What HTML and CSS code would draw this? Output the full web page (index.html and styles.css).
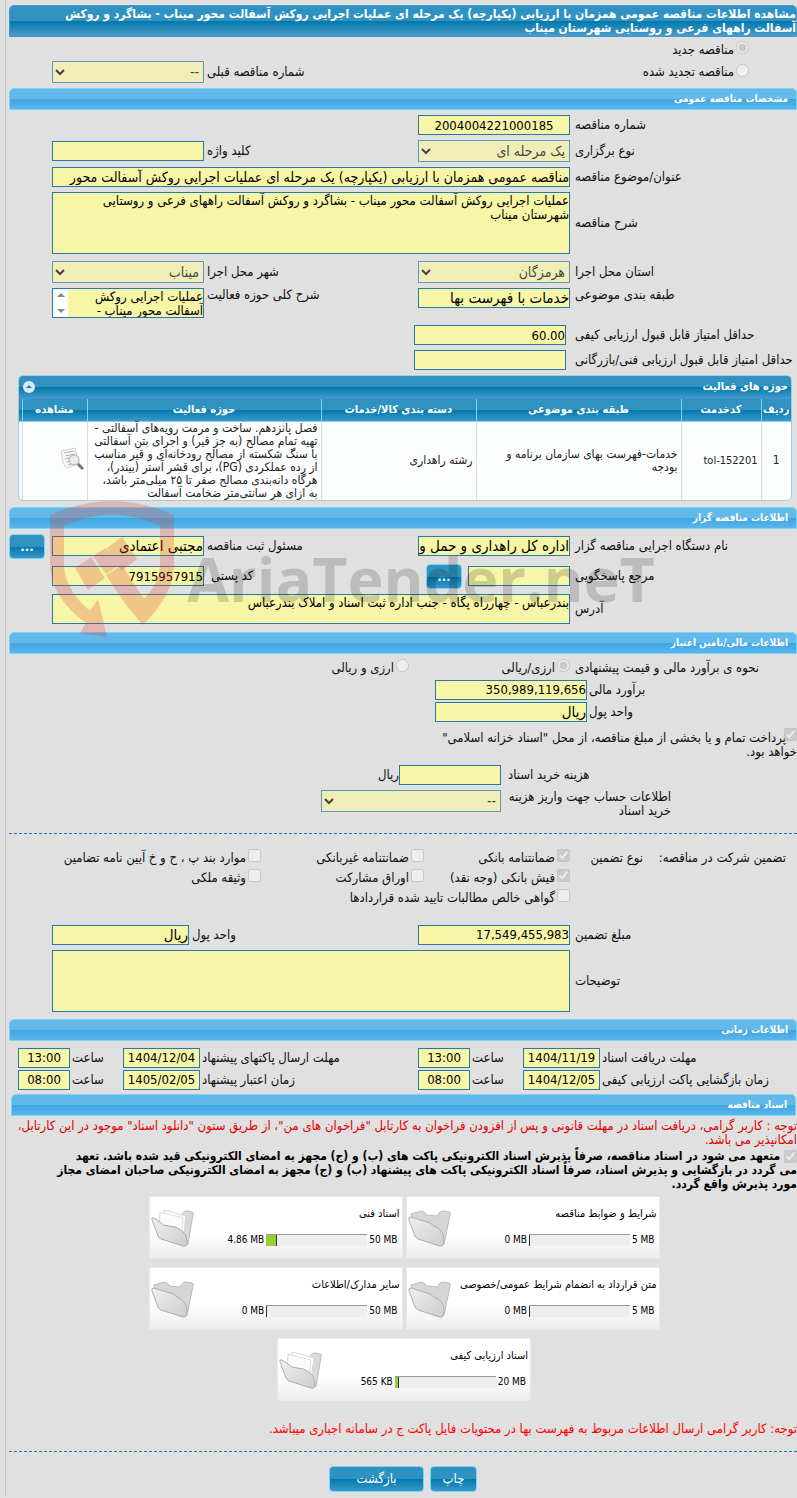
FILE: index.html
```html
<!DOCTYPE html>
<html lang="fa" dir="rtl">
<head>
    <meta charset="UTF-8">
    <meta name="viewport" content="width=device-width, initial-scale=1.0">
    <title>مشاهده اطلاعات مناقصه عمومی</title>
    <link rel="stylesheet" href="styles.css">
</head>
<body>
    <svg width="0" height="0" class="defs" aria-hidden="true">
        <defs>
            <linearGradient id="front" x1="0" y1="0" x2="1" y2="1">
                <stop offset="0" stop-color="#efefef"/>
                <stop offset="1" stop-color="#cdcdcd"/>
            </linearGradient>
            <symbol id="folder" viewBox="0 0 44 40">
                <path d="M3 5 13 2q2 0 4 2l2 2 10 1 3-4q1-1 3-1l6 1q2 0 1 3l-6 29-4 2L8 28z" fill="#d6d6d6" stroke="#bcbcbc"/>
                <path d="M1 11q-1-3 2-3l13 4q6 1 10 5 5 2 8 6 2 3 2 8 0 7-4 6L10 30q-2-1-3-3z" fill="url(#front)" stroke="#adadad"/>
            </symbol>
            <symbol id="folder-full" viewBox="0 0 44 40">
                <path d="M9 6l20 1 4-4q1-1 3-1l5 1q2 0 1 3l-5 29-4 2L9 28z" fill="#d9d9d9" stroke="#bcbcbc"/>
                <path d="M13 1l22 6-3 22-22-9z" fill="#fff" stroke="#d8d8d8"/>
                <path d="M9 3l23 6-2 22-22-11z" fill="#fbfbfb" stroke="#dedede"/>
                <path d="M1 11q-1-3 2-2l6 4q3 4 9 4 7 0 12 4 5 3 6 10 1 7-4 6L10 30q-2-1-3-3z" fill="url(#front)" stroke="#adadad"/>
            </symbol>
        </defs>
    </svg>

    <main class="page">
        <h1 class="title-bar">مشاهده اطلاعات مناقصه عمومی همزمان با ارزیابی (یکپارچه) یک مرحله ای عملیات اجرایی روکش آسفالت محور میناب - بشاگرد و روکش<br>آسفالت راههای فرعی و روستایی شهرستان میناب</h1>

        <div class="kind">
            <div class="kind-row">
                <label class="check"><input type="radio" name="kind" checked disabled>مناقصه جدید</label>
            </div>
            <div class="row">
                <label class="check kind-renew"><input type="radio" name="kind" disabled>مناقصه تجدید شده</label>
                <label class="lbl2 col3" for="prev">شماره مناقصه قبلی</label>
                <select id="prev" disabled><option>--</option></select>
            </div>
        </div>

        <h2 class="section">مشخصات مناقصه عمومی</h2>
        <div class="form">
            <div class="row">
                <label class="lbl" for="number">شماره مناقصه</label>
                <input class="num center" type="text" id="number" value="2004004221000185" readonly>
            </div>
            <div class="row">
                <label class="lbl" for="method">نوع برگزاری</label>
                <select id="method" disabled><option>یک مرحله ای</option></select>
                <label class="lbl2" for="keyword">کلید واژه</label>
                <input type="text" id="keyword" readonly>
            </div>
            <div class="row">
                <label class="lbl" for="subject">عنوان/موضوع مناقصه</label>
                <input class="wide long" type="text" id="subject" value="مناقصه عمومی همزمان با ارزیابی (یکپارچه) یک مرحله ای عملیات اجرایی روکش آسفالت محور" readonly>
            </div>
            <div class="row loose">
                <label class="lbl" for="description">شرح مناقصه</label>
                <textarea class="wide tall" id="description" readonly>عملیات اجرایی روکش آسفالت محور میناب - بشاگرد و روکش آسفالت راههای فرعی و روستایی
شهرستان میناب</textarea>
            </div>
            <div class="row">
                <label class="lbl" for="province">استان محل اجرا</label>
                <select id="province" disabled><option>هرمزگان</option></select>
                <label class="lbl2" for="city">شهر محل اجرا</label>
                <select id="city" disabled><option>میناب</option></select>
            </div>
            <div class="row top loose">
                <label class="lbl" for="category">طبقه بندی موضوعی</label>
                <input type="text" id="category" value="خدمات با فهرست بها" readonly>
                <label class="lbl2" for="scope">شرح کلی حوزه فعالیت</label>
                <div class="scope-box">
                    <textarea id="scope" readonly>عملیات اجرایی روکش
آسفالت محور میناب -</textarea>
                    <span class="spin" aria-hidden="true"><i class="up"></i><i class="down"></i></span>
                </div>
            </div>
            <div class="row score">
                <label class="lbl" for="quality">حداقل امتیاز قابل قبول ارزیابی کیفی</label>
                <input class="num" type="text" id="quality" value="60.00" readonly>
            </div>
            <div class="row score">
                <label class="lbl" for="technical">حداقل امتیاز قابل قبول ارزیابی فنی/بازرگانی</label>
                <input class="num" type="text" id="technical" readonly>
            </div>
        </div>

        <div class="panel">
            <div class="panel-head">
                <span>حوزه های فعالیت</span>
                <button type="button" class="collapse" aria-label="بستن"><svg width="12" height="12" viewBox="0 0 12 12"><circle cx="6" cy="6" r="6" fill="#dbe9f7"/><path d="M3 7h6L6 4z" fill="#217bb0"/></svg></button>
            </div>
            <table>
                <colgroup>
                    <col class="c-row"><col class="c-code"><col class="c-cat"><col class="c-group"><col><col class="c-view"><col class="c-gutter">
                </colgroup>
                <thead>
                    <tr>
                        <th>ردیف</th>
                        <th>کدخدمت</th>
                        <th>طبقه بندی موضوعی</th>
                        <th>دسته بندی کالا/خدمات</th>
                        <th>حوزه فعالیت</th>
                        <th>مشاهده</th>
                        <th></th>
                    </tr>
                </thead>
                <tbody>
                    <tr>
                        <td class="center">1</td>
                        <td class="code"><bdi>tol-152201</bdi></td>
                        <td>خدمات-فهرست بهای سازمان برنامه و<br>بودجه</td>
                        <td>رشته راهداری</td>
                        <td class="area">فصل پانزدهم. ساخت و مرمت رویه‌های آسفالتی -<br>تهیه تمام مصالح (به جز قیر) و اجرای بتن آسفالتی<br>با سنگ شکسته از مصالح رودخانه‌ای و قیر مناسب<br>از رده عملکردی (PG)، برای قشر آستر (بیندر)،<br>هرگاه دانه‌بندی مصالح صفر تا ۲۵ میلی‌متر باشد،<br>به ازای هر سانتی‌متر ضخامت آسفالت</td>
                        <td class="view">
                            <svg width="24" height="24" viewBox="0 0 24 24">
                                <path d="M1 4 15 1l4 15-12 5q-4-1-6-17z" fill="#f7f7f7" stroke="#cfcfcf"/>
                                <path d="M4 6l10-2M5 9l10-2M5 12l7-2M6 15l6-1M8 18l5-2" stroke="#b0b0b0"/>
                                <circle cx="14" cy="13" r="5" fill="#eaeaea" stroke="#aaa"/>
                                <path d="M18 17l5 5" stroke="#777" stroke-width="3"/>
                            </svg>
                        </td>
                        <td></td>
                    </tr>
                </tbody>
            </table>
        </div>

        <h2 class="section">اطلاعات مناقصه گزار</h2>
        <div class="form client">
            <svg class="watermark" width="640" height="140" viewBox="0 0 640 140" direction="ltr" aria-hidden="true">
                <g fill="#dc3c32" fill-opacity=".26">
                    <path d="M0 14Q62-14 124 14V62Q124 94 93 124Q76 106 56 74L72 64L94 98Q110 82 110 62V25Q62 2 14 25V62Q14 88 40 110L48 98L57 136L30 132L36 122Q0 96 0 62Z"/>
                    <path d="M25 67L41 56L55 77L38 89ZM57 47L72 36L87 58L72 70ZM43 55L56 47L71 63L56 73Z"/>
                </g>
                <text x="137" y="101" font-size="61" fill="#000" fill-opacity=".16">AriaTender.neT</text>
            </svg>
            <div class="row">
                <label class="lbl" for="agency">نام دستگاه اجرایی مناقصه گزار</label>
                <input type="text" id="agency" value="اداره کل راهداری و حمل و نقل جاده ای" readonly>
                <label class="lbl2" for="registrar">مسئول ثبت مناقصه</label>
                <input type="text" id="registrar" value="مجتبی اعتمادی" readonly>
                <button type="button" class="btn more last">...</button>
            </div>
            <div class="row">
                <label class="lbl" for="contact">مرجع پاسخگویی</label>
                <div class="contact">
                    <input type="text" id="contact" readonly>
                    <button type="button" class="btn more">...</button>
                </div>
                <label class="lbl2 postal" for="postal">کد پستی</label>
                <input class="num" type="text" id="postal" value="7915957915" readonly>
            </div>
            <div class="row">
                <label class="lbl" for="address">آدرس</label>
                <textarea class="wide short" id="address" readonly>بندرعباس - چهارراه پگاه - جنب اداره ثبت اسناد و املاک بندرعباس</textarea>
            </div>
        </div>

        <h2 class="section">اطلاعات مالی/تامین اعتبار</h2>
        <div class="form money">
            <div class="row currency">
                <span class="lbl">نحوه ی برآورد مالی و قیمت پیشنهادی</span>
                <label class="check"><input type="radio" name="cur" checked disabled>ارزی/ریالی</label>
                <label class="check fx"><input type="radio" name="cur" disabled>ارزی و ریالی</label>
            </div>
            <div class="estimate">
                <label class="lbl" for="estimate">برآورد مالی</label>
                <input class="num" type="text" id="estimate" value="350,989,119,656" readonly>
                <label class="lbl" for="unit">واحد پول</label>
                <input type="text" id="unit" value="ریال" readonly>
            </div>
            <label class="check treasury"><input type="checkbox" checked disabled>پرداخت تمام و یا بخشی از مبلغ مناقصه، از محل "اسناد خزانه اسلامی"<br>خواهد بود.</label>
            <div class="fee">
                <label class="lbl" for="fee">هزینه خرید اسناد</label>
                <div class="fee-field"><input type="text" id="fee" readonly><span>ریال</span></div>
                <label class="account" for="account">اطلاعات حساب جهت واریز هزینه<br>خرید اسناد</label>
                <select id="account" disabled><option>--</option></select>
            </div>
        </div>

        <hr>

        <div class="guarantee">
            <span>تضمین شرکت در مناقصه:</span>
            <span>نوع تضمین</span>
            <div class="checks">
                <label class="check"><input type="checkbox" checked disabled>ضمانتنامه بانکی</label>
                <label class="check"><input type="checkbox" disabled>ضمانتنامه غیربانکی</label>
                <label class="check"><input type="checkbox" disabled>موارد بند پ ، ح و خ آیین نامه تضامین</label>
                <label class="check"><input type="checkbox" checked disabled>فیش بانکی (وجه نقد)</label>
                <label class="check"><input type="checkbox" disabled>اوراق مشارکت</label>
                <label class="check"><input type="checkbox" disabled>وثیقه ملکی</label>
                <label class="check"><input type="checkbox" disabled>گواهی خالص مطالبات تایید شده قراردادها</label>
            </div>
        </div>
        <div class="form amount">
            <div class="row">
                <label class="lbl" for="amount">مبلغ تضمین</label>
                <input class="num" type="text" id="amount" value="17,549,455,983" readonly>
                <label class="lbl2 near" for="amount-unit">واحد پول</label>
                <input class="unit" type="text" id="amount-unit" value="ریال" readonly>
            </div>
            <div class="row">
                <label class="lbl" for="notes">توضیحات</label>
                <textarea class="wide tall" id="notes" readonly></textarea>
            </div>
        </div>

        <h2 class="section">اطلاعات زمانی</h2>
        <div class="times">
            <label class="lbl" for="d1">مهلت دریافت اسناد</label>
            <input class="num" type="text" id="d1" value="1404/11/19" readonly>
            <label class="hour" for="t1">ساعت</label>
            <input class="num" type="text" id="t1" value="13:00" readonly>
            <label class="lbl" for="d2">مهلت ارسال پاکتهای پیشنهاد</label>
            <input class="num" type="text" id="d2" value="1404/12/04" readonly>
            <label class="hour" for="t2">ساعت</label>
            <input class="num" type="text" id="t2" value="13:00" readonly>
            <label class="lbl" for="d3">زمان بازگشایی پاکت ارزیابی کیفی</label>
            <input class="num" type="text" id="d3" value="1404/12/05" readonly>
            <label class="hour" for="t3">ساعت</label>
            <input class="num" type="text" id="t3" value="08:00" readonly>
            <label class="lbl" for="d4">زمان اعتبار پیشنهاد</label>
            <input class="num" type="text" id="d4" value="1405/02/05" readonly>
            <label class="hour" for="t4">ساعت</label>
            <input class="num" type="text" id="t4" value="08:00" readonly>
        </div>

        <h2 class="section docs-title">اسناد مناقصه</h2>
        <p class="notice">توجه : کاربر گرامی، دریافت اسناد در مهلت قانونی و پس از افزودن فراخوان به کارتابل "فراخوان های من"، از طریق ستون "دانلود اسناد" موجود در این کارتابل،<br>امکانپذیر می باشد.</p>
        <label class="commit"><input type="checkbox" checked disabled> متعهد می شود در اسناد مناقصه، صرفاً پذیرش اسناد الکترونیکی پاکت های (ب) و (ج) مجهز به امضای الکترونیکی قید شده باشد. تعهد<br>می گردد در بازگشایی و پذیرش اسناد، صرفاً اسناد الکترونیکی پاکت های پیشنهاد (ب) و (ج) مجهز به امضای الکترونیکی صاحبان امضای مجاز<br>مورد پذیرش واقع گردد.</label>

        <div class="cards">
            <div class="card">
                <div class="card-name">شرایط و ضوابط مناقصه</div>
                <div class="usage"><bdi>5 MB</bdi><span class="bar"><span class="fill" style="width: 0%"></span></span><bdi>0 MB</bdi></div>
                <svg class="folder" width="44" height="40"><use href="#folder"/></svg>
            </div>
            <div class="card">
                <div class="card-name">اسناد فنی</div>
                <div class="usage"><bdi>50 MB</bdi><span class="bar"><span class="fill" style="width: 10%"></span></span><bdi>4.86 MB</bdi></div>
                <svg class="folder" width="44" height="40"><use href="#folder-full"/></svg>
            </div>
            <div class="card">
                <div class="card-name">متن قرارداد به انضمام شرایط عمومی/خصوصی</div>
                <div class="usage"><bdi>5 MB</bdi><span class="bar"><span class="fill" style="width: 0%"></span></span><bdi>0 MB</bdi></div>
                <svg class="folder" width="44" height="40"><use href="#folder"/></svg>
            </div>
            <div class="card">
                <div class="card-name">سایر مدارک/اطلاعات</div>
                <div class="usage"><bdi>50 MB</bdi><span class="bar"><span class="fill" style="width: 0%"></span></span><bdi>0 MB</bdi></div>
                <svg class="folder" width="44" height="40"><use href="#folder"/></svg>
            </div>
            <div class="card">
                <div class="card-name">اسناد ارزیابی کیفی</div>
                <div class="usage"><bdi>20 MB</bdi><span class="bar"><span class="fill" style="width: 3%"></span></span><bdi>565 KB</bdi></div>
                <svg class="folder" width="44" height="40"><use href="#folder-full"/></svg>
            </div>
        </div>

        <p class="warning">توجه: کاربر گرامی ارسال اطلاعات مربوط به فهرست بها در محتویات فایل پاکت ج در سامانه اجباری میباشد.</p>
        <hr>
        <div class="actions">
            <button type="button" class="btn print">چاپ</button>
            <button type="button" class="btn back">بازگشت</button>
        </div>
    </main>
</body>
</html>
```
FILE: styles.css
```css
* { box-sizing: border-box; }
body {
    margin: 0;
    background: #e0e0e0;
    color: #111;
    font-family: Tahoma, "DejaVu Sans Condensed", "DejaVu Sans", sans-serif;
    font-size: 13px;
    line-height: 14px;
    overflow-x: hidden;
}
.defs { position: absolute; }
.page {
    margin-left: 5px;
    padding: 5px 0 5px 3px;
    border-left: 1px solid #c8c8c8;
}
h1, h2, p { margin: 0; }
label, .lbl { white-space: nowrap; }

/* bars */
.title-bar {
    height: 32px;
    padding-top: 1px;
    border: 1px solid #4297d7;
    border-radius: 5px 5px 0 0;
    background: linear-gradient(#2f92c1 50%, #0078ae 50%, #4a9cc8);
    color: #fff;
    font-size: 12px;
    line-height: 14px;
    white-space: nowrap;
}
.section {
    height: 22px;
    padding-right: 8px;
    border: 1px solid #77d5f7;
    border-radius: 5px 5px 0 0;
    background: linear-gradient(#63b9ea 50%, #3ca6e1 50%, #5bb6ec);
    color: #fff;
    font-size: 10px;
    line-height: 20px;
}
.docs-title { margin: 4px 1px 0 2px; }

/* fields */
input[type="text"], textarea, select {
    width: 100%;
    margin: 0;
    border: 1px solid #2779aa;
    border-radius: 0;
    background: #f7f5a6;
    color: #000;
    font-family: inherit;
}
input[type="text"] { height: 20px; padding: 0; font-size: 15px; }
input.num { font-size: 13px; }
input.long { font-size: 14px; }
select { height: 22px; padding: 0; font-size: 14px; }
select:disabled { opacity: .7; color: #000; }
textarea {
    display: block;
    padding: 1px 0;
    font-size: 13px;
    line-height: 14px;
    resize: none;
    overflow: hidden;
}
input[type="text"].num { font-size: 13px; }
input[type="text"].long { font-size: 14px; }
input.center { text-align: center; }
input[type="radio"], input[type="checkbox"] {
    width: 13px;
    height: 13px;
    margin: 0 0 4px 2px;
    flex: none;
}
.check { display: flex; align-items: center; }

.form { display: grid; gap: 5px; padding: 5px 0; }
.row {
    display: grid;
    grid-template-columns: 227px 152px 1fr 152px 43px;
    align-items: center;
}
.row.top { align-items: start; }
.loose { margin-bottom: 2px; }
.lbl { padding-left: 5px; text-align: left; }
.lbl2 { padding-left: 3px; text-align: left; }
.wide { grid-column: 2 / 5; }
.tall { height: 62px; }
.short { height: 30px; }
.score { grid-template-columns: 227px 4px 152px; }
.score input { grid-column: 3; }

.kind { padding: 4px 0 5px; }
.kind-row { height: 20px; padding-right: 48px; }
.kind-renew { padding-right: 48px; }
.col3 { grid-column: 3; }

.scope-box { position: relative; }
.scope-box textarea { height: 30px; padding-left: 16px; }
.spin {
    position: absolute;
    top: 1px;
    left: 1px;
    bottom: 1px;
    width: 15px;
    background: #fdfdfd;
}
.spin i { position: absolute; left: 4px; border: 4px solid transparent; }
.spin .up { top: 0; border-bottom-color: #8a8a8a; }
.spin .down { bottom: 0; border-top-color: #8a8a8a; }

/* activity table */
.panel {
    margin: 0 5px 6px 9px;
    border: 1px solid #a6c9e2;
    border-radius: 5px;
    overflow: hidden;
    background: #fcfdfd;
}
.panel-head {
    display: flex;
    justify-content: space-between;
    align-items: center;
    height: 23px;
    padding: 0 3px 0 4px;
    background: linear-gradient(#2f92c1 50%, #0078ae 50%, #4297c7);
    border-bottom: 1px solid #4297d7;
    color: #fff;
    font-size: 11px;
    font-weight: bold;
}
.collapse { padding: 0; border: 0; background: none; line-height: 0; cursor: pointer; }
table { width: 100%; border-collapse: collapse; table-layout: fixed; }
.c-row { width: 30px; }
.c-code { width: 80px; }
.c-cat { width: 205px; }
.c-group { width: 155px; }
.c-view { width: 65px; }
.c-gutter { width: 3px; }
thead tr { background: linear-gradient(#2f92c1 50%, #0078ae 50%, #3f98c8); }
th {
    height: 22px;
    padding: 0;
    border-left: 1px solid #77d5f7;
    border-bottom: 1px solid #77d5f7;
    color: #fff;
    font-size: 11px;
    white-space: nowrap;
}
td {
    height: 78px;
    padding: 0 3px;
    border-left: 1px solid #ddd;
    color: #222;
    font-size: 12px;
    line-height: 13px;
    text-align: right;
}
th:last-child, td:last-child { border-left: 0; }
td.center { text-align: center; }
td.code { font-size: 11px; }
td.area { white-space: nowrap; }

/* buttons */
.btn {
    height: 26px;
    padding: 0;
    border: 1px solid #77d5f7;
    border-radius: 4px;
    background: linear-gradient(#2f92c1 50%, #0078ae 50%, #3b97c6);
    color: #fff;
    font-family: inherit;
    font-size: 13px;
    cursor: pointer;
}
.btn.more { width: 36px; height: 25px; font-weight: bold; }
.last { justify-self: end; }
.contact { display: flex; align-items: center; gap: 6px; }
.contact input[type="text"] { width: 102px; }
.postal { padding-left: 7px; }

.client { position: relative; padding: 5px 0 8px; }
.watermark {
    position: absolute;
    top: -28px;
    left: 41px;
    pointer-events: none;
    font-family: "Open Sans", sans-serif;
    font-weight: bold;
}

/* finance */
.money { gap: 0; padding: 2px 0; }
.currency { height: 24px; }
.currency .fx { padding-right: 9px; }
.estimate {
    display: grid;
    grid-template-columns: 210px 152px;
    align-items: center;
    row-gap: 2px;
}
.estimate .lbl { padding-left: 2px; }
.treasury { display: block; margin-top: 6px; }
.treasury input { vertical-align: bottom; margin-left: -2px; }
.fee {
    display: grid;
    grid-template-columns: 296px 180px;
    align-items: center;
    row-gap: 5px;
    margin-top: 6px;
}
.fee .lbl { padding-left: 7px; }
.fee-field { display: flex; align-items: center; }
.fee-field input[type="text"] { width: 102px; }
.account { height: 28px; margin-bottom: -6px; padding-right: 126px; }
hr { margin: 19px 0 0; border: 0; border-top: 1px dashed #2779aa; }

.guarantee { display: flex; padding: 14px 11px 0 0; }
.guarantee > span { width: 73px; line-height: 20px; white-space: nowrap; }
.guarantee > span:first-child { width: 143px; }
.checks {
    display: grid;
    grid-template-columns: 146px 163px 1fr;
    grid-auto-rows: 20px;
    flex: 1;
}
.checks .check:last-child { grid-column: 1 / 3; }
.amount { padding: 17px 0 7px; }
.amount .near { margin-left: -15px; }
.amount .unit { width: 137px; justify-self: end; }

.times {
    display: grid;
    grid-template-columns: 197px 77px 53px 52px 1fr 77px 53px 52px;
    align-items: center;
    row-gap: 2px;
    padding: 7px 0 0 9px;
}
.times input { text-align: center; }
.times .lbl { padding-left: 2px; }
.hour { padding-left: 2px; text-align: left; }

/* documents */
.notice { margin-top: 3px; color: #e00000; white-space: nowrap; }
.commit {
    display: block;
    margin-top: 2px;
    color: #000;
    font-size: 12px;
    font-weight: bold;
}
.commit input { vertical-align: bottom; margin: 0; }
.cards {
    display: flex;
    flex-wrap: wrap;
    justify-content: center;
    gap: 8px 3px;
    width: 520px;
    margin: 5px 133px 0 auto;
}
.card {
    position: relative;
    width: 254px;
    height: 63px;
    padding: 10px 2px 0;
    border: 1px solid #e8e8e8;
    background: linear-gradient(#fff 60%, #ececec);
    color: #000;
    font-size: 11px;
}
.usage {
    display: flex;
    align-items: center;
    gap: 2px;
    margin-top: 12px;
    padding-right: 2px;
    font-size: 10px;
}
.bar {
    display: flex;
    justify-content: flex-end;
    width: 101px;
    height: 12px;
    border-top: 1px solid #999;
    background: #eee;
}
.fill { box-sizing: content-box; background: #9acd32; border-right: 1px solid #333; }
.folder { position: absolute; left: 1px; top: 12px; }
.warning { margin-top: 21px; color: #f00; white-space: nowrap; }
.warning + hr { margin-top: 15px; }
.actions { display: flex; justify-content: center; gap: 6px; padding-top: 14px; }
.print { width: 47px; }
.back { width: 95px; }
```
